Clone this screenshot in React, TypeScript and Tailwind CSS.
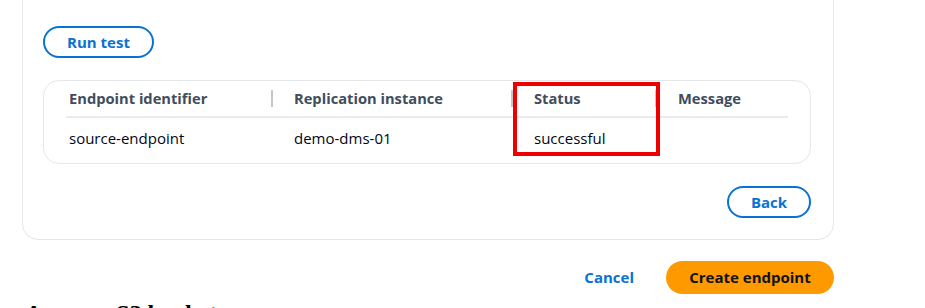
import React from "react";

const columns = [
  { title: "Endpoint identifier", value: "source-endpoint", width: "w-[225px]" },
  { title: "Replication instance", value: "demo-dms-01", width: "w-[240px]" },
  { title: "Status", value: "successful", width: "w-[144px]" },
  { title: "Message", value: "", width: "flex-1" },
];

export default function App() {
  return (
    <div
      className="relative w-[925px] h-[308px] overflow-hidden bg-white"
      style={{ fontFamily: '"Open Sans", "Noto Sans", sans-serif' }}
    >
      {/* test connection card */}
      <div className="ml-[22px] -mt-[20px] w-[812px] rounded-2xl border border-[#e4e6e9] bg-white pl-[20px] pr-[22px] pt-[45px] pb-[21px]">
        <button className="h-[32px] w-[111px] rounded-full border-2 border-[#0972d3] text-[15px] font-bold text-[#0972d3]">
          Run test
        </button>

        <div className="mt-[22px] rounded-2xl border border-[#e4e6e9]">
          <div className="mx-[22px] flex h-[35px] items-center">
            {columns.map((c, i) => (
              <div key={c.title} className={`${c.width} flex items-center justify-between pl-[3px] pr-[18px]`}>
                <span className="text-[14.7px] font-bold text-[#414d5c]">{c.title}</span>
                {i < 3 && <span className="h-[17px] w-[2px] bg-[#c6c6cd]" />}
              </div>
            ))}
          </div>
          <div className="mx-[22px] h-[2px] bg-[#e9ebed]" />
          <div className="mx-[22px] flex h-[40px] items-center">
            {columns.map((c) => (
              <div key={c.title} className={`${c.width} pl-[3px] text-[15px] text-[#000716]`}>
                {c.value}
              </div>
            ))}
          </div>
          <div className="h-[5px]" />
        </div>

        <div className="mt-[22px] flex justify-end">
          <button className="h-[32px] w-[84px] rounded-full border-2 border-[#0972d3] text-[15px] font-bold text-[#0972d3]">
            Back
          </button>
        </div>
      </div>

      {/* footer actions */}
      <div className="mt-[21px] flex w-[834px] items-center justify-end gap-[32px]">
        <span className="text-[15px] font-bold text-[#0972d3]">Cancel</span>
        <button className="h-[33px] w-[168px] rounded-full bg-[#ff9900] text-[15px] font-bold text-[#0f141a]">
          Create endpoint
        </button>
      </div>

      <div
        className="ml-[25px] mt-[5px] text-[24px] font-bold leading-[28px] text-black"
        style={{ fontFamily: '"Liberation Serif", serif' }}
      >
        Amazon S3 bucket
      </div>

      {/* annotation */}
      <div className="absolute left-[513px] top-[82px] h-[74px] w-[147px] border-4 border-[#ee0000]" />
    </div>
  );
}
